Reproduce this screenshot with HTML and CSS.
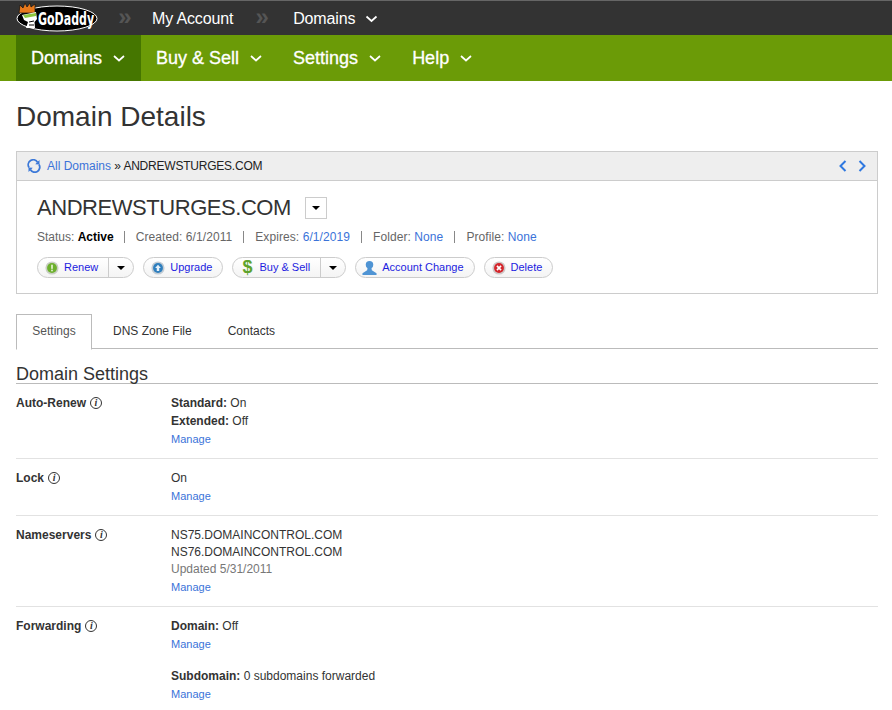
FILE: index.html
```html
<!DOCTYPE HTML>
<html>

<head>
<meta charset="utf-8">
<title>Domain Details</title>

<link rel="stylesheet" href="styles.css">
</head>

<body>

<div class="topbar">
  <svg class="logo" width="84" height="34" viewBox="0 0 84 34">
    <ellipse cx="41" cy="18.5" rx="40" ry="12.5" fill="#000" stroke="#fff" stroke-width="1"/>
    <path d="M3 13 L4 5 L7 8 L9 3 L11 7 L14 3 L15 7 L19 4 L19 13 Z" fill="#e8791c" stroke="#111" stroke-width=".7"/>
    <path d="M6 15 L20 12 L21 19 L18.5 22 L19 28 L10 28 L12 22 L8 20 Z" fill="#fff"/>
    <path d="M7 15 L20 13 L20 16 L9 18 Z" fill="#8cc63f"/>
    <path d="M13 22 L18 21 M13 25 L18 25" stroke="#000" stroke-width="1"/>
    <text class="logo-text" transform="translate(22 25) scale(.72 1)">GoDaddy</text>
  </svg>
  <span class="crumb-sep">&raquo;</span>
  <a class="top-link">My Account</a>
  <span class="crumb-sep sep2">&raquo;</span>
  <a class="top-link link2">Domains
    <svg class="chev" width="13" height="8" viewBox="0 0 13 8"><path d="M1.5 1.5 L6.5 6 L11.5 1.5"/></svg>
  </a>
</div>

<div class="mainnav">
  <a class="nav-item active">Domains <svg class="chev" width="12" height="7" viewBox="0 0 12 7"><path d="M1 1 L6 5.5 L11 1"/></svg></a>
  <a class="nav-item">Buy &amp; Sell <svg class="chev" width="12" height="7" viewBox="0 0 12 7"><path d="M1 1 L6 5.5 L11 1"/></svg></a>
  <a class="nav-item">Settings <svg class="chev" width="12" height="7" viewBox="0 0 12 7"><path d="M1 1 L6 5.5 L11 1"/></svg></a>
  <a class="nav-item">Help <svg class="chev" width="12" height="7" viewBox="0 0 12 7"><path d="M1 1 L6 5.5 L11 1"/></svg></a>
</div>

<div class="content">
  <h1>Domain Details</h1>

  <div class="panel">
    <div class="panel-head">
      <svg class="refresh" width="14" height="14" viewBox="0 0 14 14">
        <path d="M2 8.5 A5 5 0 0 1 10.5 3.2 M12 5.5 A5 5 0 0 1 3.5 10.8"/>
        <path class="fill" d="M12.5 1 L12.5 5.5 L8.2 5.2 Z M1.5 13 L1.5 8.5 L5.8 8.8 Z"/>
      </svg>
      <span class="crumbs"><a class="link">All Domains</a> &raquo; <span class="crumb-name">ANDREWSTURGES.COM</span></span>
      <span class="pager">
        <svg width="8" height="12" viewBox="0 0 8 12"><path d="M6.5 1 L1.5 6 L6.5 11"/></svg>
        <svg width="8" height="12" viewBox="0 0 8 12"><path d="M1.5 1 L6.5 6 L1.5 11"/></svg>
      </span>
    </div>
    <div class="panel-body">
      <div class="name-row">
        <span class="domain-name">ANDREWSTURGES.COM</span>
        <span class="name-drop"><i class="caret"></i></span>
      </div>
      <div class="meta">
        <span class="status">Status: <b>Active</b></span><i class="pipe"></i>
        <span>Created: 6/1/2011</span><i class="pipe"></i>
        <span>Expires: <a class="link">6/1/2019</a></span><i class="pipe"></i>
        <span>Folder: <a class="link">None</a></span><i class="pipe"></i>
        <span>Profile: <a class="link">None</a></span>
      </div>
      <div class="actions">
        <span class="btn">
          <span class="btn-main">
            <svg width="14" height="14" viewBox="0 0 17 17"><circle cx="8.5" cy="8.5" r="8" fill="#c9cfc4"/><circle cx="8.5" cy="8.5" r="6" fill="#6cb02c"/><rect x="7.5" y="4.5" width="2" height="5" fill="#e8f5d8"/><rect x="7.5" y="10.5" width="2" height="2" fill="#e8f5d8"/></svg>
            <span>Renew</span>
          </span>
          <span class="btn-drop"><i class="caret"></i></span>
        </span>
        <span class="btn">
          <span class="btn-main">
            <svg width="14" height="14" viewBox="0 0 17 17"><circle cx="8.5" cy="8.5" r="8" fill="#c3ccd4"/><circle cx="8.5" cy="8.5" r="6" fill="#2f7fbe"/><path d="M8.5 4.5 L12 8.5 L10 8.5 L10 12 L7 12 L7 8.5 L5 8.5 Z" fill="#e6f1fa"/></svg>
            <span>Upgrade</span>
          </span>
        </span>
        <span class="btn">
          <span class="btn-main">
            <span class="dollar">$</span>
            <span>Buy &amp; Sell</span>
          </span>
          <span class="btn-drop"><i class="caret"></i></span>
        </span>
        <span class="btn">
          <span class="btn-main tight">
            <svg width="15" height="16" viewBox="0 0 16 17"><circle cx="8" cy="5" r="4" fill="#4f94d4"/><path d="M6 8 L10 8 L10.5 11 L15.5 14 L15.5 16 L.5 16 L.5 14 L5.5 11 Z" fill="#4f94d4"/></svg>
            <span>Account Change</span>
          </span>
        </span>
        <span class="btn">
          <span class="btn-main">
            <svg width="14" height="14" viewBox="0 0 17 17"><circle cx="8.5" cy="8.5" r="8" fill="#cfc8c8"/><circle cx="8.5" cy="8.5" r="6" fill="#d4262c"/><path d="M6 6 L11 11 M11 6 L6 11" stroke="#fff" stroke-width="2"/></svg>
            <span>Delete</span>
          </span>
        </span>
      </div>
    </div>
  </div>

  <div class="tabs">
    <a class="tab current">Settings</a>
    <a class="tab">DNS Zone File</a>
    <a class="tab">Contacts</a>
  </div>

  <h2>Domain Settings</h2>

  <div class="setting first">
    <div class="setting-label">Auto-Renew <i class="info">i</i></div>
    <div class="setting-value">
      <div class="line"><b>Standard:</b> On</div>
      <div class="line"><b>Extended:</b> Off</div>
      <div class="line"><a class="manage">Manage</a></div>
    </div>
  </div>

  <div class="setting">
    <div class="setting-label">Lock <i class="info">i</i></div>
    <div class="setting-value">
      <div class="line">On</div>
      <div class="line"><a class="manage">Manage</a></div>
    </div>
  </div>

  <div class="setting">
    <div class="setting-label">Nameservers <i class="info">i</i></div>
    <div class="setting-value">
      <div class="line">NS75.DOMAINCONTROL.COM</div>
      <div class="line">NS76.DOMAINCONTROL.COM</div>
      <div class="line muted">Updated 5/31/2011</div>
      <div class="line"><a class="manage">Manage</a></div>
    </div>
  </div>

  <div class="setting last">
    <div class="setting-label">Forwarding <i class="info">i</i></div>
    <div class="setting-value">
      <div class="line"><b>Domain:</b> Off</div>
      <div class="line"><a class="manage">Manage</a></div>
      <div class="line spaced"><b>Subdomain:</b> 0 subdomains forwarded</div>
      <div class="line"><a class="manage">Manage</a></div>
    </div>
  </div>
</div>

</body>
</html>
```

FILE: styles.css
```css
body {
  margin: 0;
  background: #fff;
  color: #333;
  font-family: "Liberation Sans", Arial, sans-serif;
  font-size: 12px;
  overflow-x: hidden;
}

a {
  text-decoration: none;
}

/* top bar */

.topbar {
  height: 34px;
  border-top: 1px solid #666;
  background: #333;
  display: flex;
  align-items: center;
  color: #fff;
}

.logo {
  margin: -1px 0 0 16px;
  align-self: flex-start;
  flex: none;
}

.logo-text {
  font-family: "DejaVu Sans Condensed", "DejaVu Sans", sans-serif;
  font-weight: bold;
  font-size: 17px;
  fill: #fff;
}

.crumb-sep {
  width: 16px;
  margin: -3px 0 0 17px;
  color: #555;
  font-size: 24px;
  font-weight: bold;
  line-height: 24px;
  text-align: center;
}

.crumb-sep.sep2 {
  margin-left: 21px;
}

.top-link {
  margin: 1px 0 0 19px;
  color: #fff;
  font-size: 16px;
  letter-spacing: -.15px;
}

.top-link.link2 {
  margin-left: 23px;
}

.top-link .chev {
  margin-left: 5px;
  vertical-align: 1px;
}

.chev {
  fill: none;
  stroke: #fff;
  stroke-width: 1.7;
}

/* green nav */

.mainnav {
  height: 46px;
  padding-left: 16px;
  background: #6b9b07;
  display: flex;
}

.nav-item {
  display: flex;
  align-items: center;
  gap: 11px;
  padding: 0 16px 0 15px;
  color: #fff;
  font-size: 18px;
  -webkit-text-stroke: .3px #fff;
}

.nav-item .chev {
  margin-top: 1px;
}

.nav-item.active {
  background: #457600;
}

/* page */

.content {
  padding: 0 14px 0 16px;
}

h1 {
  margin: 0;
  padding-top: 20px;
  height: 50px;
  color: #333;
  font-size: 28px;
  font-weight: normal;
  line-height: 32px;
}

.panel {
  border: 1px solid #ccc;
}

.panel-head {
  height: 28px;
  padding-left: 10px;
  background: #eee;
  border-bottom: 1px solid #ccc;
  display: flex;
  align-items: center;
  color: #222;
}

.refresh {
  margin-right: 6px;
  fill: none;
  stroke: #3b78d8;
  stroke-width: 1.8;
}

.refresh .fill {
  fill: #3b78d8;
  stroke: none;
}

.crumb-name {
  margin-left: -1px;
  letter-spacing: -.22px;
}

.link {
  color: #3b73d9;
}

.pager {
  margin-left: auto;
  margin-right: 11px;
  display: flex;
  gap: 11px;
}

.pager svg {
  fill: none;
  stroke: #2f78e0;
  stroke-width: 2;
}

.panel-body {
  height: 112px;
  padding-left: 20px;
}

.name-row {
  display: flex;
  align-items: center;
  height: 26px;
  padding-top: 14px;
}

.domain-name {
  color: #333;
  font-size: 22px;
  letter-spacing: -.45px;
}

.name-drop {
  width: 20px;
  height: 20px;
  margin-left: 14px;
  border: 1px solid #ccc;
  display: flex;
  align-items: center;
  justify-content: center;
}

.caret {
  width: 0;
  height: 0;
  border-left: 4px solid transparent;
  border-right: 4px solid transparent;
  border-top: 4px solid #000;
}

.meta {
  margin-top: 8px;
  height: 16px;
  display: flex;
  align-items: center;
  color: #666;
  letter-spacing: .08px;
}

.meta .status {
  letter-spacing: 0;
  margin-right: -1px;
}

.meta b {
  color: #000;
}

.pipe {
  width: 1px;
  height: 12px;
  margin: 0 11px;
  background: #888;
}

.actions {
  margin-top: 12px;
  display: flex;
  gap: 9px;
}

.btn {
  height: 19px;
  border: 1px solid #ccc;
  border-radius: 11px;
  display: flex;
  font-size: 11px;
  color: #1c1ce0;
  background: linear-gradient(#fff, #f4f4f4);
}

.btn-main {
  display: flex;
  align-items: center;
  gap: 5px;
  padding: 0 10px 0 7px;
}

.btn-main span {
  margin-top: -1px;
}

.btn-main.tight {
  padding-left: 6px;
}

.btn-drop {
  width: 24px;
  border-left: 1px solid #ccc;
  display: flex;
  align-items: center;
  justify-content: center;
}

.dollar {
  width: 14px;
  text-align: center;
  color: #5ea32c;
  font-size: 18px;
  font-weight: bold;
  line-height: 18px;
}

/* tabs */

.tabs {
  margin-top: 20px;
  height: 34px;
  border-bottom: 1px solid #bbb;
  display: flex;
}

.tab {
  height: 34px;
  line-height: 35px;
  padding: 0 15px;
  margin-right: 6px;
  color: #333;
}

.tab.current {
  width: 44px;
  height: 34px;
  line-height: 33px;
  border: 1px solid #bbb;
  border-bottom: 1px solid #fff;
  color: #555;
  text-align: center;
  background: #fff;
}

h2 {
  margin: 15px 0 0;
  height: 19px;
  border-bottom: 1px solid #bbb;
  color: #333;
  font-size: 18px;
  font-weight: normal;
  line-height: 21px;
}

/* rows */

.setting {
  display: flex;
  padding: 11px 0 9px;
  border-bottom: 1px solid #e2e2e2;
}

.setting.first {
  padding: 10px 0 9px;
}

.setting.first .setting-label {
  margin-top: 1px;
}

.setting.first .line {
  line-height: 18px;
}

.setting.last {
  border-bottom: 0;
  padding-bottom: 7px;
}

.setting-label {
  width: 155px;
  font-weight: bold;
  line-height: 17px;
  display: flex;
  align-items: flex-start;
  gap: 4px;
}

.info {
  width: 10px;
  height: 10px;
  margin-top: 2px;
  border: 1px solid #333;
  border-radius: 50%;
  font-family: "Liberation Serif", serif;
  font-size: 10px;
  font-style: italic;
  font-weight: bold;
  line-height: 10px;
  text-align: center;
}

.line {
  line-height: 17px;
}

.line b {
  color: #333;
}

.line.spaced {
  margin-top: 14px;
}

.muted {
  color: #777;
}

.manage {
  color: #3b73d9;
  font-size: 11px;
  line-height: 19px;
}
```
